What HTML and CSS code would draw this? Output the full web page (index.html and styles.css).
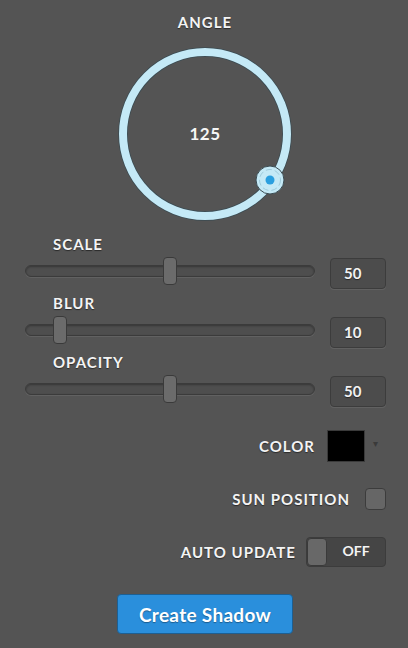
FILE: index.html
```html
<!DOCTYPE html>
<html lang="en">

<head>
    <meta charset="UTF-8">
    <meta name="viewport" content="width=device-width, initial-scale=1.0">
    <title>Shadow Panel</title>
    <link rel="stylesheet" href="styles.css">
</head>

<body>
    <div class="panel">
        <!-- Angle dial -->
        <div class="angle">
            <h2 class="label">ANGLE</h2>
            <div class="dial">
                <svg width="180" height="180" viewBox="0 0 180 180">
                    <circle cx="90" cy="90" r="82" fill="none" stroke="#3a4b52" stroke-width="9.5"></circle>
                    <circle cx="90" cy="90" r="82" fill="none" stroke="#c4e9f6" stroke-width="8"></circle>
                    <circle cx="155" cy="136" r="14" fill="#c4e9f6" stroke="#3a4b52" stroke-width="1"></circle>
                    <circle cx="155" cy="136" r="10.5" fill="none" stroke="#9fcbdb" stroke-width="1" stroke-dasharray="6 3"></circle>
                    <circle cx="155" cy="136" r="4.5" fill="#2a9fdf"></circle>
                    <text x="90" y="96" class="dial-value" text-anchor="middle">125</text>
                </svg>
            </div>
        </div>

        <!-- Sliders -->
        <div class="sliders">
            <div class="slider-group">
                <div class="label slider-label">SCALE</div>
                <div class="slider-row">
                    <div class="slider">
                        <div class="track"></div>
                        <div class="thumb" style="left: calc((100% - 14px) * 0.5)"></div>
                    </div>
                    <div class="num-box">50</div>
                </div>
            </div>
            <div class="slider-group">
                <div class="label slider-label">BLUR</div>
                <div class="slider-row">
                    <div class="slider">
                        <div class="track"></div>
                        <div class="thumb" style="left: calc((100% - 14px) * 0.1)"></div>
                    </div>
                    <div class="num-box">10</div>
                </div>
            </div>
            <div class="slider-group">
                <div class="label slider-label">OPACITY</div>
                <div class="slider-row">
                    <div class="slider">
                        <div class="track"></div>
                        <div class="thumb" style="left: calc((100% - 14px) * 0.5)"></div>
                    </div>
                    <div class="num-box">50</div>
                </div>
            </div>
        </div>

        <!-- Options -->
        <div class="options">
            <div class="option-row">
                <span class="label">COLOR</span>
                <div class="swatch"></div>
                <span class="caret">&#9662;</span>
            </div>
            <div class="option-row">
                <span class="label">SUN POSITION</span>
                <div class="checkbox"></div>
            </div>
            <div class="option-row">
                <span class="label">AUTO UPDATE</span>
                <div class="toggle">
                    <div class="toggle-knob"></div>
                    <span class="toggle-text">OFF</span>
                </div>
            </div>
        </div>

        <div class="actions">
            <button type="button" class="create-button">Create Shadow</button>
        </div>
    </div>
</body>

</html>
```

FILE: styles.css
```css
body {
    margin: 0;
    padding: 0;
    background-color: #545454;
    font-family: Lato, "Open Sans", Arial, sans-serif;
    color: #f2f2f2;
}

.panel {
    width: 408px;
    height: 648px;
    padding-top: 14px;
    box-sizing: border-box;
    display: flex;
    flex-direction: column;
}

.label {
    font-size: 15px;
    font-weight: 700;
    line-height: 16px;
    letter-spacing: 1px;
    color: #f4f4f4;
    text-shadow: 0 1px 1px rgba(0, 0, 0, 0.5);
    margin: 0;
}

/* Angle dial */
.angle {
    display: flex;
    flex-direction: column;
    align-items: center;
    padding-left: 2px;
}

.dial {
    margin-top: 14px;
    height: 180px;
}

.dial-value {
    font-family: Lato, "Open Sans", Arial, sans-serif;
    font-size: 17px;
    font-weight: 700;
    fill: #f6f6f6;
    letter-spacing: 0.5px;
}

/* Sliders */
.sliders {
    margin-top: 12px;
    padding: 0 22px 0 25px;
    display: flex;
    flex-direction: column;
    gap: 5px;
}

.slider-label {
    margin-left: 28px;
    margin-bottom: 6px;
}

.slider-row {
    display: flex;
    align-items: flex-start;
    height: 32px;
}

.slider {
    position: relative;
    flex: 1;
    height: 28px;
    margin-top: -1px;
}

.track {
    position: absolute;
    left: 0;
    right: 0;
    top: 8px;
    height: 10px;
    background-color: #4e4e4e;
    border: 1px solid #3b3b3b;
    border-radius: 6px;
    box-shadow: inset 0 1px 2px rgba(0, 0, 0, 0.3), 0 1px 0 rgba(255, 255, 255, 0.08);
}

.thumb {
    position: absolute;
    top: 0;
    width: 14px;
    height: 28px;
    box-sizing: border-box;
    background-color: #6b6b6b;
    border: 1px solid #3a3a3a;
    border-radius: 4px;
}

.num-box {
    width: 56px;
    height: 31px;
    margin-left: 15px;
    box-sizing: border-box;
    padding-left: 13px;
    background-color: #4c4c4c;
    border: 1px solid #3c3c3c;
    border-radius: 4px;
    box-shadow: 0 1px 0 rgba(255, 255, 255, 0.08);
    font-size: 15px;
    font-weight: 700;
    line-height: 29px;
    text-shadow: 0 1px 1px rgba(0, 0, 0, 0.5);
}

/* Options */
.options {
    margin-top: 22px;
    padding-right: 22px;
    display: flex;
    flex-direction: column;
    gap: 21px;
}

.option-row {
    display: flex;
    justify-content: flex-end;
    align-items: center;
    height: 32px;
}

.swatch {
    width: 38px;
    height: 32px;
    box-sizing: border-box;
    margin-left: 12px;
    background-color: #000;
    border: 1px solid #3a3a3a;
}

.caret {
    width: 21px;
    text-align: center;
    font-size: 10px;
    color: #3a3a3a;
    margin-top: -6px;
}

.checkbox {
    width: 21px;
    height: 22px;
    box-sizing: border-box;
    margin-left: 15px;
    background-color: #666;
    border: 1px solid #3c3c3c;
    border-radius: 4px;
}

.toggle {
    display: flex;
    align-items: center;
    width: 80px;
    height: 30px;
    margin-left: 10px;
    box-sizing: border-box;
    background-color: #454545;
    border: 1px solid #3c3c3c;
    border-radius: 4px;
}

.toggle-knob {
    width: 20px;
    height: 28px;
    box-sizing: border-box;
    background-color: #686868;
    border: 1px solid #3a3a3a;
    border-radius: 4px;
}

.toggle-text {
    flex: 1;
    text-align: center;
    font-size: 14px;
    font-weight: 700;
    color: #f4f4f4;
    margin-top: -3px;
}

/* Button */
.actions {
    display: flex;
    justify-content: center;
    margin-top: 26px;
    padding-left: 2px;
}

.create-button {
    width: 176px;
    height: 40px;
    font-family: Lato, "Open Sans", Arial, sans-serif;
    font-size: 19px;
    font-weight: 700;
    letter-spacing: 0.3px;
    color: #fff;
    background-color: #2a8fdc;
    border: 1px solid #1d5f92;
    border-radius: 4px;
    text-shadow: 0 1px 1px rgba(0, 0, 0, 0.35);
    cursor: pointer;
}
```
